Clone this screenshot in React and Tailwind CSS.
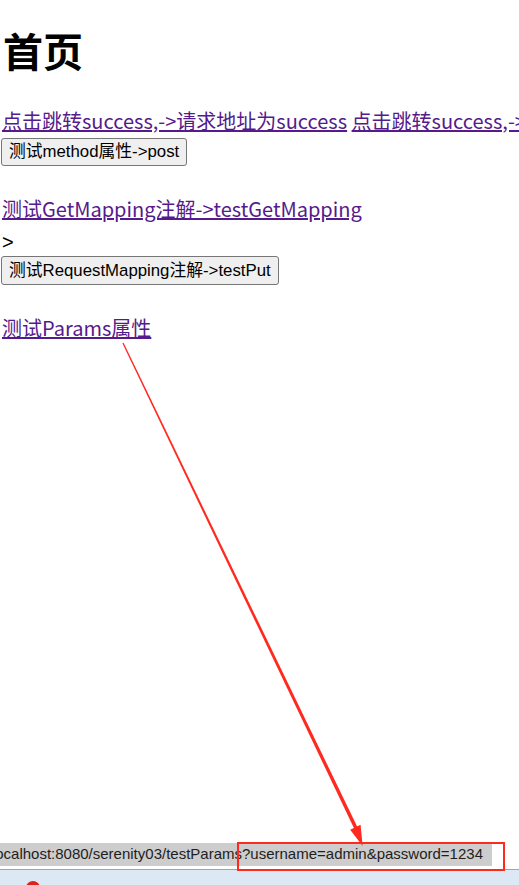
export default function App() {
  const cjk = { fontFamily: '"Noto Sans CJK SC", "Noto Sans", sans-serif' }
  const btnFont = { fontFamily: '"Liberation Sans", "Noto Sans CJK SC", sans-serif' }

  return (
    <div className="relative h-[885px] w-[519px] overflow-hidden bg-white text-black">
      <div className="flex flex-col items-start pl-[1px]">
        <h1 className="mt-[26px] pl-[2px] text-[40px] font-bold leading-[48px]" style={cjk}>
          首页
        </h1>

        <div className="mt-[35px] h-[24px] w-full overflow-hidden whitespace-nowrap pl-[1px] text-[20px] leading-[24px] text-[#551a8b]" style={cjk}>
          <a href="#" className="underline">点击跳转success,-&gt;请求地址为success</a>{' '}
          <a href="#" className="underline">点击跳转success,-&gt;请求地址为success</a>
        </div>

        <button
          type="button"
          className="mt-[5px] h-[28px] rounded-[3px] border border-[#767676] bg-[#efefef] px-[7px] text-[16.8px] leading-[26px]"
          style={btnFont}
        >
          测试method属性-&gt;post
        </button>

        <div className="mt-[31px] h-[24px] pl-[1px] text-[20px] leading-[24px] text-[#551a8b]" style={cjk}>
          <a href="#" className="underline">测试GetMapping注解-&gt;testGetMapping</a>
        </div>

        <div className="mt-[9px] h-[24px] pl-[1px] text-[20px] leading-[24px]" style={btnFont}>
          &gt;
        </div>

        <button
          type="button"
          className="mt-[2px] h-[29px] rounded-[3px] border border-[#767676] bg-[#efefef] px-[7px] text-[16.8px] leading-[27px]"
          style={btnFont}
        >
          测试RequestMapping注解-&gt;testPut
        </button>

        <div className="mt-[31px] h-[24px] pl-[1px] text-[20px] leading-[24px] text-[#551a8b]" style={cjk}>
          <a href="#" className="underline">测试Params属性</a>
        </div>
      </div>

      {/* status bar */}
      <div className="absolute left-0 top-[843px] flex h-[23px] w-[492px] items-center justify-end overflow-hidden whitespace-nowrap bg-[#cdcdcd] pr-[9px] text-[15px] text-[#1e1e1e]" style={btnFont}>
        localhost:8080/serenity03/testParams?username=admin&amp;password=1234
      </div>

      {/* taskbar strip */}
      <div className="absolute left-0 top-[869px] h-[16px] w-full border-t border-[#a3a3a3] bg-[#dde8f5]" />
      <div className="absolute left-[26px] top-[881px] h-[14px] w-[14px] rounded-full bg-[#e0201a]" />

      {/* annotation box */}
      <div className="absolute left-[237px] top-[842px] h-[29px] w-[268px] border-2 border-[#ff2a1f]" />

      {/* annotation arrow */}
      <svg className="absolute left-0 top-0" width="519" height="885" viewBox="0 0 519 885">
        <polygon
          points="122.4,343.3 123.6,342.7 357.6,827.5 354.4,829.1"
          fill="#ff2a1f"
        />
        <polygon points="362.6,846 350.2,829.8 360.6,824.8" fill="#ff2a1f" />
      </svg>
    </div>
  )
}
